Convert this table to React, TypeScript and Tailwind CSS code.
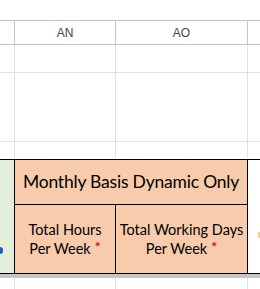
import React from 'react';

const headLine = 'border-[#c4c4c4]';
const gridLine = 'border-[#e1e1e1]';

function GridRow({ h, last }: { h: string; last?: string }) {
  return (
    <div className={`flex ${h} border-b ${last ?? gridLine}`}>
      <div className="w-[14px] shrink-0" />
      <div className={`w-[101px] shrink-0 border-l ${gridLine}`} />
      <div className={`w-[132px] shrink-0 border-l ${gridLine}`} />
      <div className={`flex-1 border-l ${gridLine}`} />
    </div>
  );
}

function Required() {
  return <span className="text-[#ff0000] text-[14px] leading-none font-bold relative -top-[2px] ml-[4px]">*</span>;
}

export default function App() {
  return (
    <div className="w-[260px] h-[289px] bg-white overflow-hidden font-['Lato',sans-serif]">
      <div className="h-[20px]" />

      {/* column header row */}
      <div className={`flex h-[25px] border-y ${headLine} bg-white text-[12px] text-[#444] font-['Liberation_Sans',sans-serif]`}>
        <div className="w-[14px] shrink-0" />
        <div className={`w-[101px] shrink-0 border-l ${headLine} flex items-center justify-center`}>AN</div>
        <div className={`w-[132px] shrink-0 border-l ${headLine} flex items-center justify-center`}>AO</div>
        <div className={`flex-1 border-l ${headLine}`} />
      </div>

      <GridRow h="h-[28px]" />
      <GridRow h="h-[69px]" />
      <GridRow h="h-[17px]" last="border-transparent" />

      {/* bordered block */}
      <div className="flex h-[115px] border-y border-black">
        <div className="w-[14px] shrink-0 bg-[#e2efda] relative overflow-hidden">
          <div className="absolute left-0 top-[87px] w-[3px] h-[7px] rounded-r-full bg-[#1f5fbf]" />
        </div>
        <div className="w-[234px] shrink-0 border-x border-black flex flex-col bg-[#f8cbad] text-black">
          <div className="h-[45px] border-b border-black flex items-center justify-center text-[17.5px] tracking-[-0.2px]">
            Monthly Basis Dynamic Only
          </div>
          <div className="flex flex-1 text-[14.5px] leading-[19px] text-center">
            <div className="w-[101px] shrink-0 border-r border-black flex items-center justify-center">
              <div>
                Total Hours
                <br />
                Per Week
                <Required />
              </div>
            </div>
            <div className="flex-1 flex items-center justify-center">
              <div>
                Total Working Days
                <br />
                Per Week
                <Required />
              </div>
            </div>
          </div>
        </div>
        <div className="flex-1 relative overflow-hidden">
          <div className="absolute left-[10px] top-[72px] w-[2px] h-[6px] bg-[#f0d080]" />
        </div>
      </div>

      {/* frozen pane divider */}
      <div className="h-[4px] bg-[#c6c6c6]" />
      <GridRow h="h-[20px]" />
    </div>
  );
}
